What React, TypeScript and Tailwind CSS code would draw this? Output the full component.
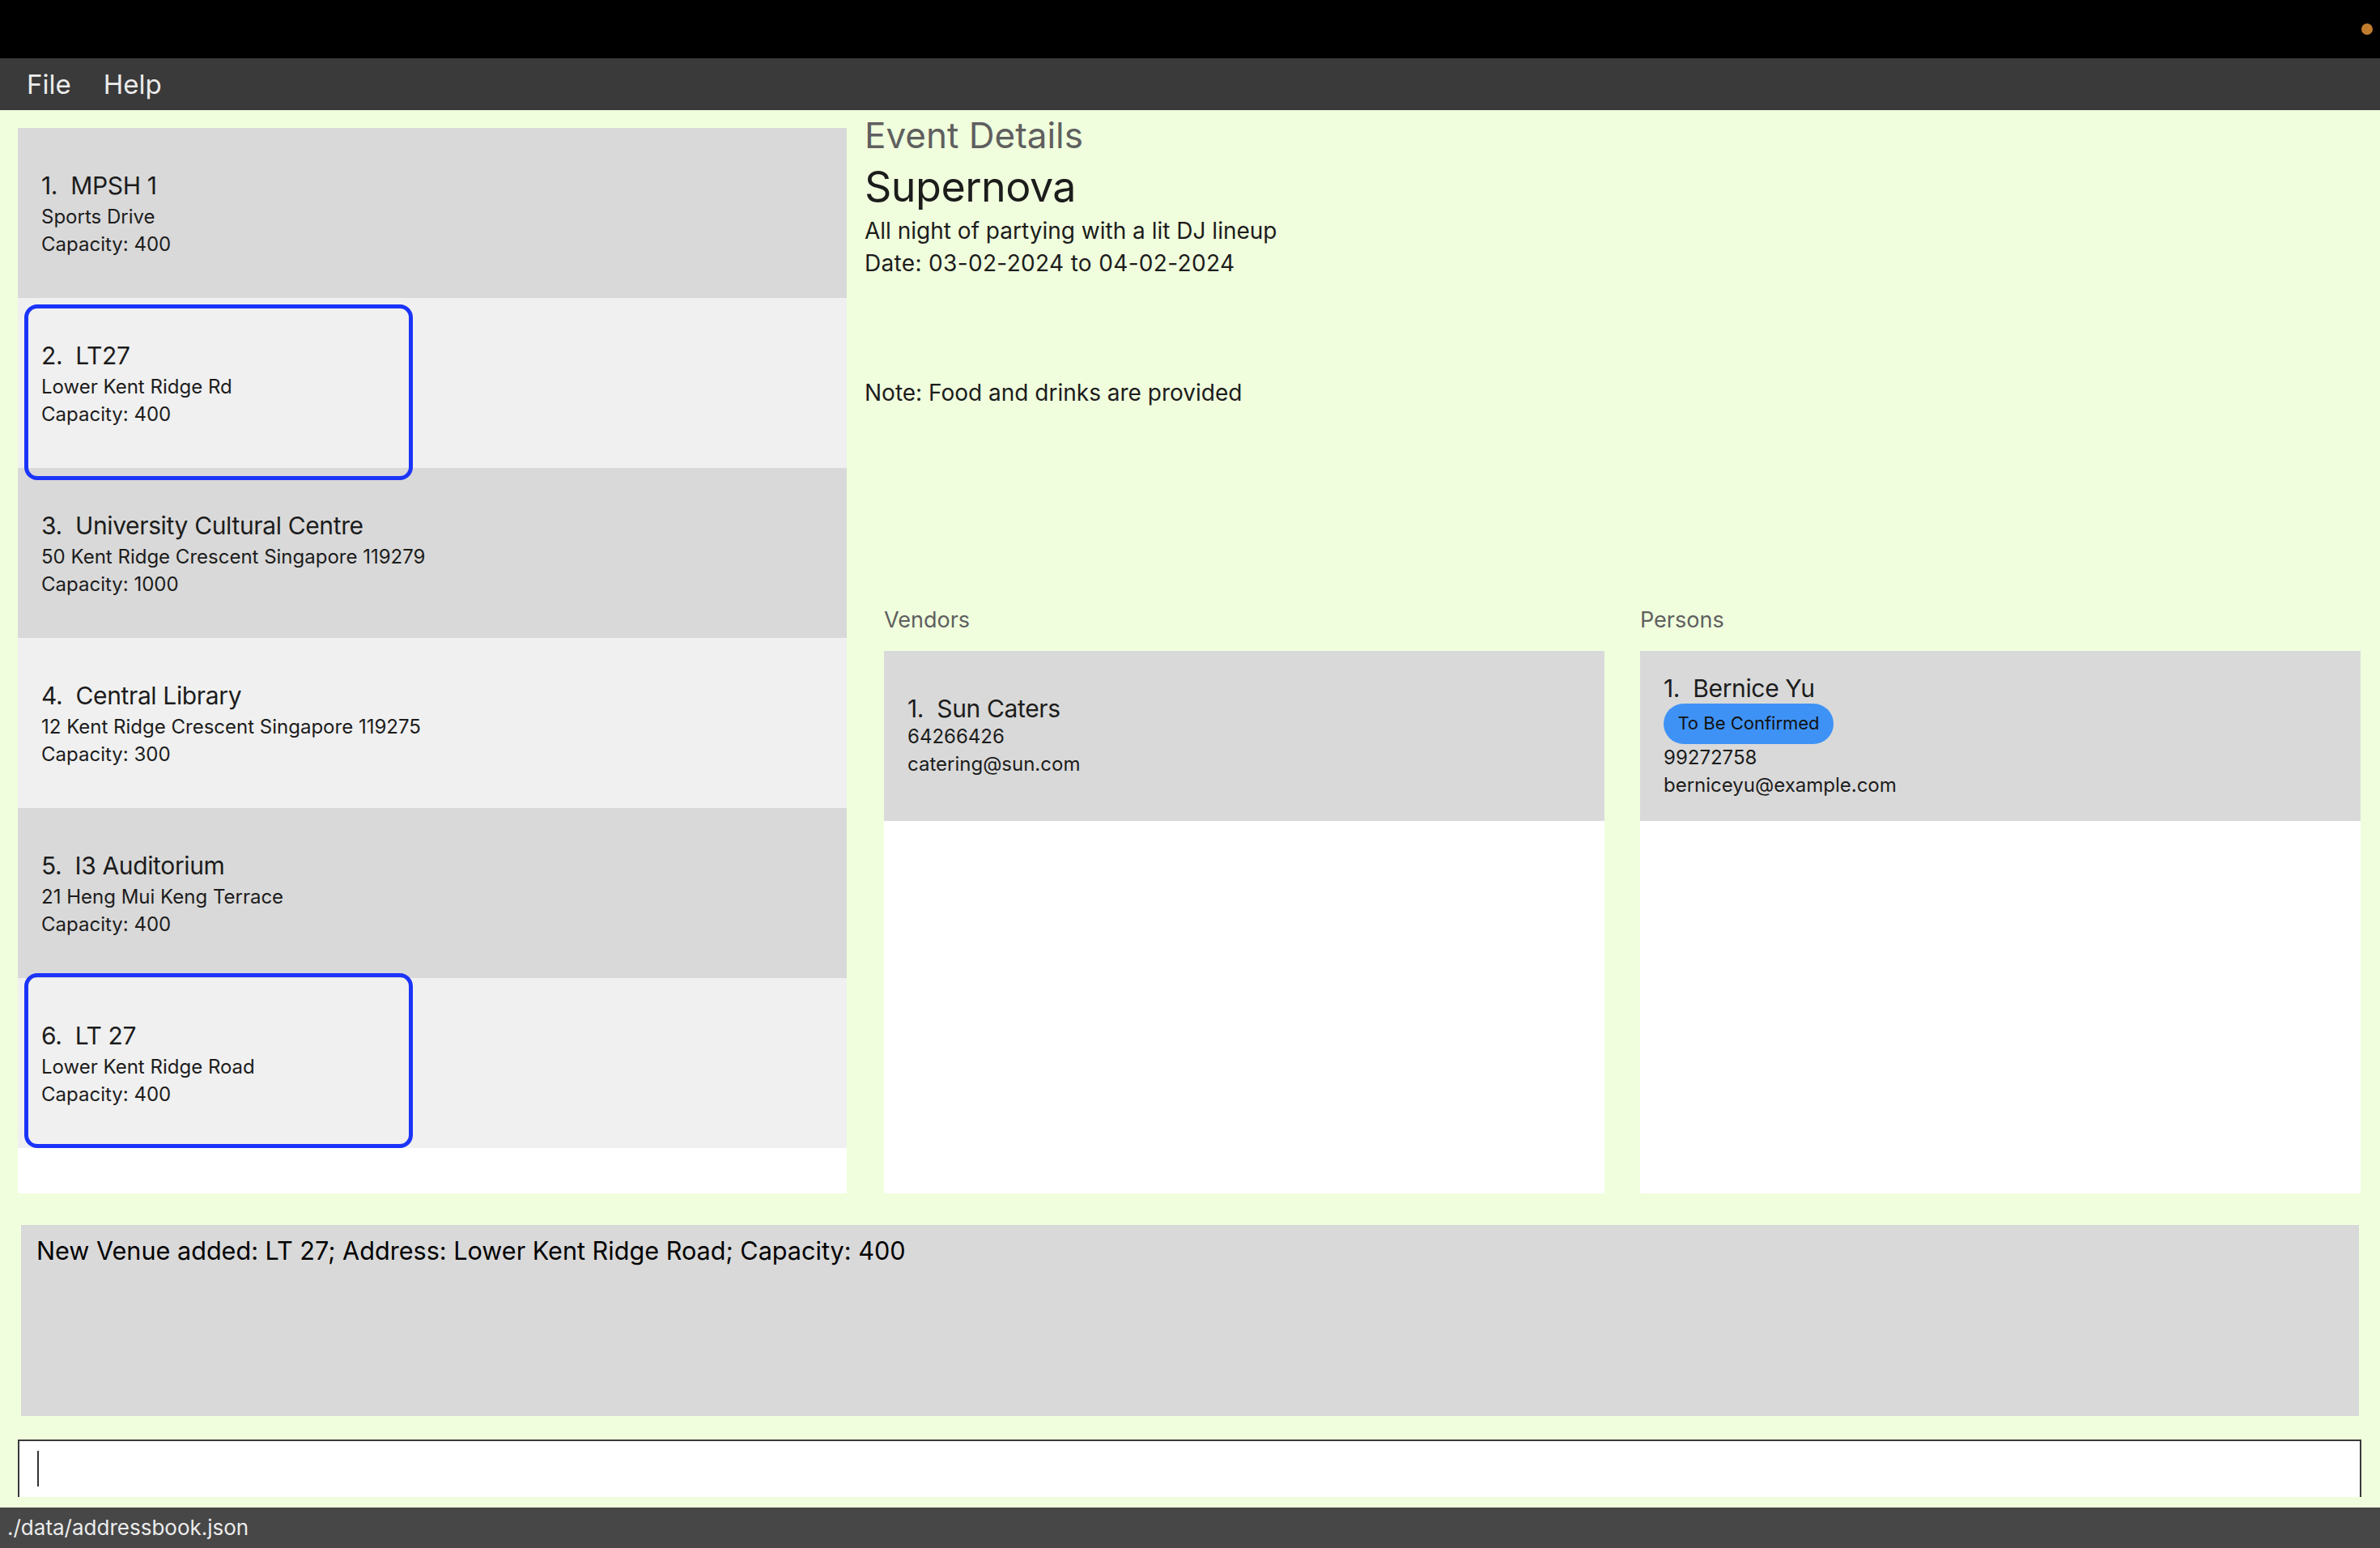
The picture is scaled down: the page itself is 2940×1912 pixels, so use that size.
import React from "react";

const venues = [
  { n: 1, name: "MPSH 1", addr: "Sports Drive", cap: "400" },
  { n: 2, name: "LT27", addr: "Lower Kent Ridge Rd", cap: "400" },
  { n: 3, name: "University Cultural Centre", addr: "50 Kent Ridge Crescent Singapore 119279", cap: "1000" },
  { n: 4, name: "Central Library", addr: "12 Kent Ridge Crescent Singapore 119275", cap: "300" },
  { n: 5, name: "I3 Auditorium", addr: "21 Heng Mui Keng Terrace", cap: "400" },
  { n: 6, name: "LT 27", addr: "Lower Kent Ridge Road", cap: "400" },
];

export default function App() {
  return (
    <div className="w-[2940px] h-[1912px] flex flex-col bg-[#f0fedd] font-['Inter',sans-serif] text-[#1c1c1c] overflow-hidden">
      {/* title bar */}
      <div className="h-[72px] bg-black relative shrink-0">
        <div className="absolute left-[2917px] top-[29px] w-[14px] h-[14px] rounded-full bg-[#c27c2e]" />
      </div>
      {/* menu bar */}
      <div className="h-[64px] bg-[#3a3a3a] flex items-center text-[33px] leading-[64px] text-[#ececec] shrink-0">
        <span className="ml-[33px]">File</span>
        <span className="ml-[40px]">Help</span>
      </div>

      {/* main row */}
      <div className="h-[1338px] flex shrink-0">
        {/* venue list */}
        <div className="mt-[22px] ml-[22px] w-[1024px] h-[1316px] bg-white relative">
          {venues.map((v, i) => (
            <div
              key={v.n}
              className={
                "h-[210px] flex flex-col justify-center pl-[29px] pt-[4px] " +
                (i % 2 === 0 ? "bg-[#d9d9d9]" : "bg-[#f0f0f0]")
              }
            >
              <div className="text-[30px] leading-[36px] tracking-[-0.012em] whitespace-pre">{v.n + ".  " + v.name}</div>
              <div className="mt-[4px] text-[24px] leading-[34px]">{v.addr}</div>
              <div className="text-[24px] leading-[34px]">Capacity: {v.cap}</div>
            </div>
          ))}
          <div className="absolute left-[8px] top-[218px] w-[480px] h-[217px] border-[5px] border-[#1b34f9] rounded-[16px]" />
          <div className="absolute left-[8px] top-[1044px] w-[480px] h-[216px] border-[5px] border-[#1b34f9] rounded-[16px]" />
        </div>

        {/* right side */}
        <div className="ml-[22px] flex-1 flex flex-col">
          <div className="mt-[5px] text-[44px] leading-[52px] text-[#5f5f5f]">Event Details</div>
          <div className="mt-[8px] text-[52px] leading-[60px] tracking-[-0.01em]">Supernova</div>
          <div className="mt-[4px] text-[28px] leading-[40px]">All night of partying with a lit DJ lineup</div>
          <div className="text-[28px] leading-[40px] tracking-[0.012em]">Date: 03-02-2024 to 04-02-2024</div>
          <div className="mt-[120px] text-[28px] leading-[40px]">Note: Food and drinks are provided</div>

          <div className="mt-[243px] mx-[24px] grid grid-cols-2 gap-[44px]">
            <div className="flex flex-col">
              <div className="text-[27px] leading-[36px] text-[#5f5f5f]">Vendors</div>
              <div className="mt-[20px] h-[670px] bg-white">
                <div className="h-[210px] bg-[#d9d9d9] flex flex-col justify-center pl-[29px]">
                  <div className="text-[30px] leading-[36px] tracking-[-0.012em] whitespace-pre">{"1.  Sun Caters"}</div>
                  <div className="text-[24px] leading-[34px]">64266426</div>
                  <div className="text-[24px] leading-[34px]">catering@sun.com</div>
                </div>
              </div>
            </div>
            <div className="flex flex-col">
              <div className="text-[27px] leading-[36px] text-[#5f5f5f]">Persons</div>
              <div className="mt-[20px] h-[670px] bg-white">
                <div className="h-[210px] bg-[#d9d9d9] flex flex-col justify-center pl-[29px]">
                  <div className="text-[30px] leading-[36px] tracking-[-0.012em] whitespace-pre">{"1.  Bernice Yu"}</div>
                  <div className="mt-[1px] flex">
                    <div className="h-[50px] w-[210px] rounded-full bg-[#3e92f6] flex items-center justify-center text-[22px] text-[#111]">
                      To Be Confirmed
                    </div>
                  </div>
                  <div className="text-[24px] leading-[34px]">99272758</div>
                  <div className="text-[24px] leading-[34px]">berniceyu@example.com</div>
                </div>
              </div>
            </div>
          </div>
        </div>
      </div>

      {/* result box */}
      <div className="mt-[39px] mx-[26px] h-[236px] bg-[#d9d9d9] pt-[14px] pl-[19px] shrink-0">
        <div className="text-[30.6px] leading-[36px] text-black">
          New Venue added: LT 27; Address: Lower Kent Ridge Road; Capacity: 400
        </div>
      </div>

      {/* command box */}
      <div className="mt-[29px] ml-[22px] mr-[23px] h-[71px] bg-white border-t-2 border-l-2 border-r-2 border-[#3a3a3a] pt-[12px] pl-[22px] shrink-0">
        <div className="w-[2px] h-[44px] bg-[#333]" />
      </div>

      {/* status bar */}
      <div className="mt-[13px] h-[50px] bg-[#474747] pl-[9px] text-[26px] leading-[50px] text-[#ececec] shrink-0">
        ./data/addressbook.json
      </div>
    </div>
  );
}
